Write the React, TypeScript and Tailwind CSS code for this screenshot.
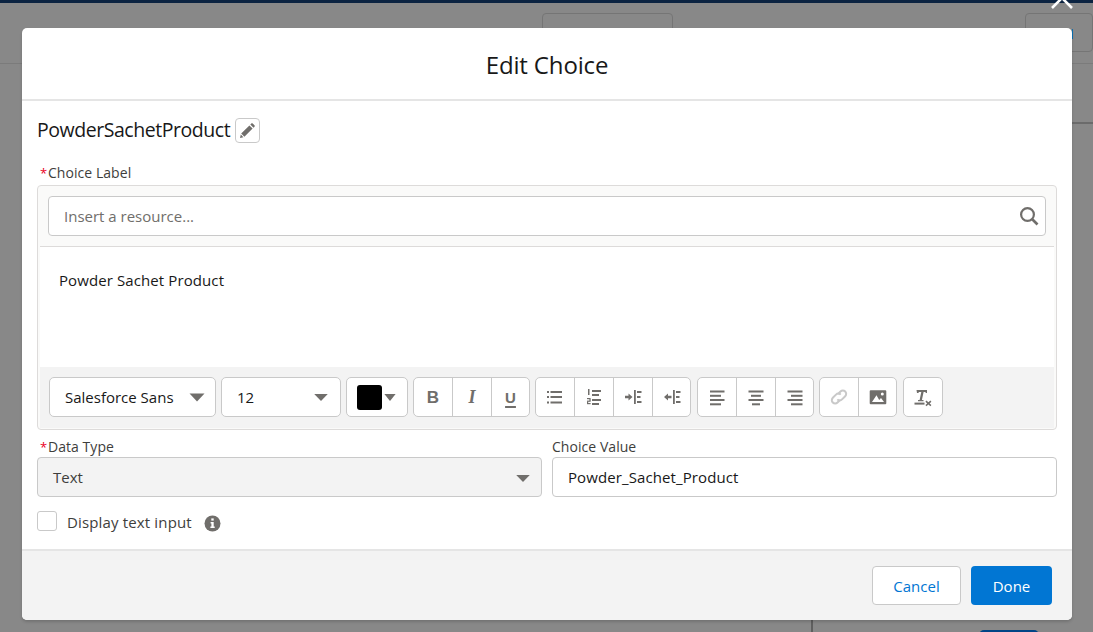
import React from 'react';

const Caret = ({ className = '' }: { className?: string }) => (
  <svg className={className} width="16" height="9" viewBox="0 0 16 9"><path d="M0.5 0.5h15L8 8.5z" fill="#706e6b" /></svg>
);

const Icon = ({ children, color = '#706e6b' }: { children: React.ReactNode; color?: string }) => (
  <svg width="20" height="20" viewBox="0 0 20 20" fill={color}>{children}</svg>
);

const ToolButton = ({ children }: { children: React.ReactNode }) => (
  <div className="w-[39px] first:w-[38px] last:w-[38px] h-full flex items-center justify-center border-l border-[#c9c9c9] first:border-l-0">{children}</div>
);

const ToolGroup = ({ children, className = '' }: { children: React.ReactNode; className?: string }) => (
  <div className={`h-10 flex bg-white border border-[#c9c9c9] rounded-[5px] ${className}`}>{children}</div>
);

const Bar = ({ x, y, w }: { x: number; y: number; w: number }) => <rect x={x} y={y} width={w} height="2" />;

export default function App() {
  return (
    <div className="relative w-[1093px] h-[632px] overflow-hidden bg-[#888888] text-[#181818] font-['Open_Sans','Noto_Sans',sans-serif]">
      {/* dimmed page behind the dialog */}
      <div className="h-[3px] bg-[#0b2341]" />
      <div className="h-[61px] border-b border-[#7b7b7b] flex">
        <div className="ml-[542px] mt-[10px] w-[131px] h-10 border border-[#757575] rounded-[4px]" />
        <div className="ml-[352px] mt-[10px] w-[68px] h-[39px] border border-[#757575] rounded-[4px]" />
      </div>
      <div className="absolute left-[1072px] top-[29px] w-px h-[10px] bg-[#0b6fb0]" />
      <div className="absolute left-[1072px] right-0 top-[122px] h-[2px] bg-[#6b6b6b]" />
      <div className="absolute left-[811px] top-[620px] w-[2px] h-3 bg-[#5f5f5f]" />
      <div className="absolute left-[979px] top-[630px] w-[60px] h-4 rounded-t-[5px] bg-[#014486]" />
      <svg className="absolute left-[1050px] top-0" width="24" height="10" viewBox="0 0 24 10">
        <path d="M2 8L12 -2L22 8" fill="none" stroke="#fff" strokeWidth="2.6" />
      </svg>

      {/* dialog */}
      <div className="absolute left-[22px] top-[28px] w-[1050px] h-[592px] bg-white rounded-[5px] shadow-[0_2px_3px_rgba(0,0,0,0.16)] flex flex-col overflow-hidden">
        <div className="h-[73px] shrink-0 border-b-2 border-[#e5e5e5] flex items-center justify-center pt-[2px]">
          <h2 className="text-[24px] leading-none font-normal tracking-[-0.15px]">Edit Choice</h2>
        </div>

        <div className="flex-1 px-[15px]">
          <div className="mt-[16px] h-[26px] flex items-center gap-[5px]">
            <span className="text-[19.5px] leading-none tracking-[-0.45px]">PowderSachetProduct</span>
            <div className="w-[25px] h-[25px] border border-[#c9c9c9] rounded-[4px] flex items-center justify-center">
              <svg width="15" height="15" viewBox="0 0 15 15" fill="#706e6b">
                <path d="M1.2 10.6L9.4 2.4l3.2 3.2-8.2 8.2zM0.8 11.6L0 15l3.4-.8zM10.3 1.5l1-1c.4-.4 1-.4 1.4 0l1.8 1.8c.4.4.4 1 0 1.4l-1 1z" />
              </svg>
            </div>
          </div>

          <div className="mt-[21px] h-[18px] flex items-center text-[14px] leading-none text-[#3e3e3c] tracking-[0.05px]">
            <span className="w-[11px] pl-[3px] text-[#ea001e] text-[13px]">*</span>Choice Label
          </div>

          <div className="mt-[3px] h-[245px] bg-[#fafaf9] border border-[#dddbda] rounded-[4px] px-[1px] pb-[1px] flex flex-col">
            <div className="px-[9px] pt-[10px] pb-[10px]">
              <div className="h-10 bg-white border border-[#c9c9c9] rounded-[4px] flex items-center justify-between pl-[15px] pr-[6px]">
                <span className="text-[15px] leading-none text-[#706e6b]">Insert a resource...</span>
                <svg width="20" height="20" viewBox="0 0 20 20" fill="none" stroke="#706e6b">
                  <circle cx="8.5" cy="8.5" r="6.4" strokeWidth="2.2" />
                  <path d="M13 13l5.5 5.5" strokeWidth="2.6" />
                </svg>
              </div>
            </div>
            <div className="flex-1 bg-white border-t border-[#dddbda] mx-[1px] pt-[23px] pl-[19px]">
              <p className="text-[15px] leading-5 tracking-[0.1px]">Powder Sachet Product</p>
            </div>
            <div className="h-[61px] mx-[1px] bg-[#f3f3f3] px-[9px] pt-[10px] flex gap-[5px]">
              <div className="w-[167px] h-10 bg-white border border-[#c9c9c9] rounded-[5px] flex items-center justify-between pl-[15px] pr-[10px]">
                <span className="text-[15px] leading-none">Salesforce Sans</span>
                <Caret />
              </div>
              <div className="w-[120px] h-10 bg-white border border-[#c9c9c9] rounded-[5px] flex items-center justify-between pl-[15px] pr-[11px]">
                <span className="text-[15px] leading-none">12</span>
                <Caret className="scale-90" />
              </div>
              <div className="w-[62px] h-10 bg-white border border-[#c9c9c9] rounded-[5px] flex items-center pl-[10px]">
                <div className="w-[25px] h-[25px] bg-black rounded-[3px]" />
                <Caret className="ml-0 scale-x-75 scale-y-90" />
              </div>
              <ToolGroup>
                <ToolButton>
                  <span className="text-[17px] leading-none font-bold text-[#706e6b] font-['Liberation_Sans',sans-serif]">B</span>
                </ToolButton>
                <ToolButton>
                  <span className="text-[18px] leading-none font-bold italic text-[#706e6b] font-['Liberation_Serif',serif]">I</span>
                </ToolButton>
                <ToolButton>
                  <span className="text-[15px] leading-none font-bold text-[#706e6b] underline underline-offset-[3px] decoration-2 font-['Liberation_Sans',sans-serif]">U</span>
                </ToolButton>
              </ToolGroup>
              <ToolGroup>
                <ToolButton>
                  <Icon>
                    <Bar x={5.5} y={4} w={11.5} />
                    <Bar x={5.5} y={9} w={11.5} />
                    <Bar x={5.5} y={14.5} w={11.5} />
                    <rect x="2" y="4" width="2" height="2" />
                    <rect x="2" y="9" width="2" height="2" />
                    <rect x="2" y="14.5" width="2" height="2" />
                  </Icon>
                </ToolButton>
                <ToolButton>
                  <Icon>
                    <Bar x={8} y={3} w={9} />
                    <Bar x={8} y={7} w={7} />
                    <Bar x={8} y={12} w={9} />
                    <Bar x={8} y={16} w={7} />
                    <rect x="4" y="2" width="1.5" height="6" />
                    <rect x="3" y="11" width="3.6" height="1.2" />
                    <rect x="5.4" y="12" width="1.2" height="2" />
                    <rect x="3" y="13.6" width="3.6" height="1.2" />
                    <rect x="3" y="14.5" width="1.2" height="2" />
                    <rect x="3" y="16" width="3.6" height="1.2" />
                  </Icon>
                </ToolButton>
                <ToolButton>
                  <Icon>
                    <path d="M2 8.8h3.5V6.5L9.5 10l-4 3.5v-2.3H2z" />
                    <rect x="11" y="3" width="1.8" height="14" />
                    <Bar x={14} y={4} w={4.5} />
                    <Bar x={14} y={9} w={3.5} />
                    <Bar x={14} y={14} w={4.5} />
                  </Icon>
                </ToolButton>
                <ToolButton>
                  <Icon>
                    <path d="M9.5 8.8H6V6.5L2 10l4 3.5v-2.3h3.5z" />
                    <rect x="11" y="3" width="1.8" height="14" />
                    <Bar x={14} y={4} w={4.5} />
                    <Bar x={14} y={9} w={3.5} />
                    <Bar x={14} y={14} w={4.5} />
                  </Icon>
                </ToolButton>
              </ToolGroup>
              <ToolGroup className="ml-px">
                <ToolButton>
                  <Icon><Bar x={3} y={3.5} w={14.5} /><Bar x={3} y={7.8} w={11} /><Bar x={3} y={12} w={14.5} /><Bar x={3} y={16.3} w={11} /></Icon>
                </ToolButton>
                <ToolButton>
                  <Icon><Bar x={2.5} y={3.5} w={15} /><Bar x={5} y={7.8} w={10} /><Bar x={2.5} y={12} w={15} /><Bar x={6} y={16.3} w={8} /></Icon>
                </ToolButton>
                <ToolButton>
                  <Icon><Bar x={2.5} y={3.5} w={15} /><Bar x={6} y={7.8} w={11.5} /><Bar x={2.5} y={12} w={15} /><Bar x={6} y={16.3} w={11.5} /></Icon>
                </ToolButton>
              </ToolGroup>
              <ToolGroup>
                <ToolButton>
                  <svg width="20" height="20" viewBox="0 0 20 20" fill="none" stroke="#c9c9c9" strokeWidth="2">
                    <path d="M9 7l2.5-2.5a3.3 3.3 0 0 1 4.7 4.7L13 12.4a3.3 3.3 0 0 1-4.7 0" />
                    <path d="M11 13l-2.5 2.5a3.3 3.3 0 0 1-4.7-4.7L7 7.6a3.3 3.3 0 0 1 4.7 0" />
                  </svg>
                </ToolButton>
                <ToolButton>
                  <Icon>
                    <path fillRule="evenodd" d="M2.7 3.2h14.6a1 1 0 0 1 1 1v12a1 1 0 0 1-1 1H2.7a1 1 0 0 1-1-1v-12a1 1 0 0 1 1-1zM14.3 5.5a1.5 1.5 0 1 0 0 3 1.5 1.5 0 0 0 0-3zM4 15h12l-3-4-1.8 2-2.7-4.8z" />
                  </Icon>
                </ToolButton>
              </ToolGroup>
              <ToolGroup className="ml-px">
                <ToolButton>
                  <Icon>
                    <path d="M3.5 3h10.5v3h-1.4V5H10.6l-1.7 8h1.6v1.2H5v-1.2h1.6l1.7-8H5.8L5.5 6H4z" />
                    <rect x="1.5" y="15.6" width="10" height="2" />
                    <path d="M13.4 13.6l2 1.6 2-1.6 1 1.1-1.8 1.7 1.8 1.7-1 1.1-2-1.6-2 1.6-1-1.1 1.8-1.7-1.8-1.7z" />
                  </Icon>
                </ToolButton>
              </ToolGroup>
            </div>
          </div>

          <div className="mt-[7px] grid grid-cols-2 gap-[10px]">
            <div>
              <div className="h-5 flex items-center text-[14px] leading-none text-[#3e3e3c] tracking-[0.05px]">
                <span className="w-[11px] pl-[3px] text-[#ea001e] text-[13px]">*</span>Data Type
              </div>
              <div className="h-10 bg-[#f3f3f3] border border-[#c9c9c9] rounded-[4px] flex items-center justify-between pl-[15px] pr-[10px]">
                <span className="text-[15px] leading-none text-[#3e3e3c]">Text</span>
                <Caret className="mt-[2px] scale-90" />
              </div>
            </div>
            <div>
              <div className="h-5 flex items-center text-[14px] leading-none text-[#3e3e3c] tracking-[0.05px]">Choice Value</div>
              <div className="h-10 bg-white border border-[#c9c9c9] rounded-[4px] flex items-center pl-[15px]">
                <span className="text-[15px] leading-none tracking-[0.1px]">Powder_Sachet_Product</span>
              </div>
            </div>
          </div>

          <div className="mt-[14px] h-5 flex items-center">
            <div className="w-5 h-5 border border-[#c9c9c9] rounded-[3px] bg-white" />
            <span className="ml-[10px] pt-[2px] text-[15px] leading-none text-[#3e3e3c] tracking-[0.15px]">Display text input</span>
            <svg className="ml-[12px] mt-[5px]" width="17" height="17" viewBox="0 0 17 17">
              <circle cx="8.5" cy="8.5" r="8" fill="#706e6b" />
              <rect x="7.3" y="3.4" width="2.4" height="2.2" fill="#fff" />
              <path d="M6.6 7h3.1v4.6h1v1.4H6.4v-1.4h1V8.4h-.8z" fill="#fff" />
            </svg>
          </div>
        </div>

        <div className="h-[71px] shrink-0 bg-[#f3f3f3] border-t-2 border-[#e5e5e5] flex items-start justify-end gap-[10px] pt-[15px] pr-[20px]">
          <button className="w-[89px] h-[39px] pt-px bg-white border border-[#c9c9c9] rounded-[4px] text-[15px] leading-none text-[#0176d3]">Cancel</button>
          <button className="w-[81px] h-[39px] pt-px bg-[#0176d3] rounded-[4px] text-[15px] leading-none text-white">Done</button>
        </div>
      </div>
    </div>
  );
}
